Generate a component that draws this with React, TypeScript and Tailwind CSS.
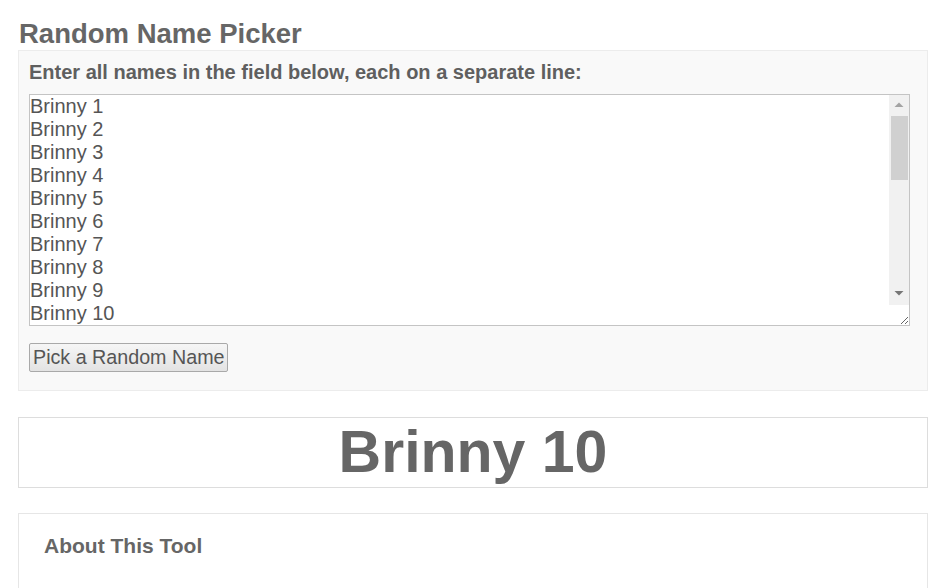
import React, { useState } from "react";

const initialNames = Array.from({ length: 27 }, (_, i) => `Brinny ${i + 1}`).join("\n");

// the headless browser hides native scrollbars, so the classic one is drawn over the textarea
const FakeScrollbar: React.FC = () => (
  <div className="pointer-events-none absolute right-px top-px flex h-[210px] w-[20px] flex-col bg-[#f1f1f1]">
    <div className="h-[20px] w-[20px]">
      <svg width="20" height="20" viewBox="0 0 20 20">
        <polygon points="5.5,12 14.5,12 10,7.5" fill="#a3a3a3" />
      </svg>
    </div>
    <div className="ml-[2px] mr-px mt-px h-[64px] bg-[#d0d0d0]" />
    <div className="flex-1" />
    <div className="h-[20px] w-[20px]">
      <svg width="20" height="20" viewBox="0 0 20 20">
        <polygon points="5.5,6 14.5,6 10,10.5" fill="#767676" />
      </svg>
    </div>
  </div>
);

const App: React.FC = () => {
  const [names, setNames] = useState(initialNames);
  const [picked, setPicked] = useState("Brinny 10");

  const pickName = () => {
    const list = names
      .split("\n")
      .map((n) => n.trim())
      .filter(Boolean);
    if (list.length === 0) return;
    setPicked(list[Math.floor(Math.random() * list.length)]);
  };

  return (
    <div className="min-h-screen bg-white pl-[18px] pr-[10px] pt-[17px] font-['Liberation_Sans',Arial,sans-serif] text-[#666]">
      <h1 className="h-[33px] pl-px text-[27.5px] font-bold leading-[33px] text-[#666]">
        Random Name Picker
      </h1>

      {/* Picker panel */}
      <div className="border border-[#ececec] bg-[#f9f9f9] pb-[18px] pl-[10px] pr-[17px] pt-[10px]">
        <label
          htmlFor="names"
          className="block h-[23px] text-[20px] font-bold leading-[23px] text-[#5f5f5f]"
        >
          Enter all names in the field below, each on a separate line:
        </label>
        <div className="relative mt-[10px]">
          <textarea
            id="names"
            value={names}
            onChange={(e) => setNames(e.target.value)}
            className="block h-[232px] w-full border border-[#c4c4c4] bg-white py-0 pl-0 pr-[20px] text-[20px] leading-[23px] text-[#555] outline-none"
          />
          <FakeScrollbar />
        </div>
        <button
          onClick={pickName}
          className="mt-[17px] h-[29px] rounded-[2px] border border-[#a9a9a9] bg-gradient-to-b from-[#f6f6f6] to-[#e3e3e3] px-[3px] text-[19.7px] leading-[27px] text-[#555]"
        >
          Pick a Random Name
        </button>
      </div>

      {/* Result */}
      <div className="mt-[26px] flex h-[71px] items-center justify-center border border-[#dddddd] bg-white">
        <span className="text-[59px] font-bold leading-none text-[#666]">{picked}</span>
      </div>

      {/* About */}
      <div className="mt-[25px] h-[120px] border border-[#e6e6e6] bg-white px-[25px] pt-[19px]">
        <h2 className="text-[21px] font-bold leading-[26px] text-[#666]">About This Tool</h2>
      </div>
    </div>
  );
};

export default App;
